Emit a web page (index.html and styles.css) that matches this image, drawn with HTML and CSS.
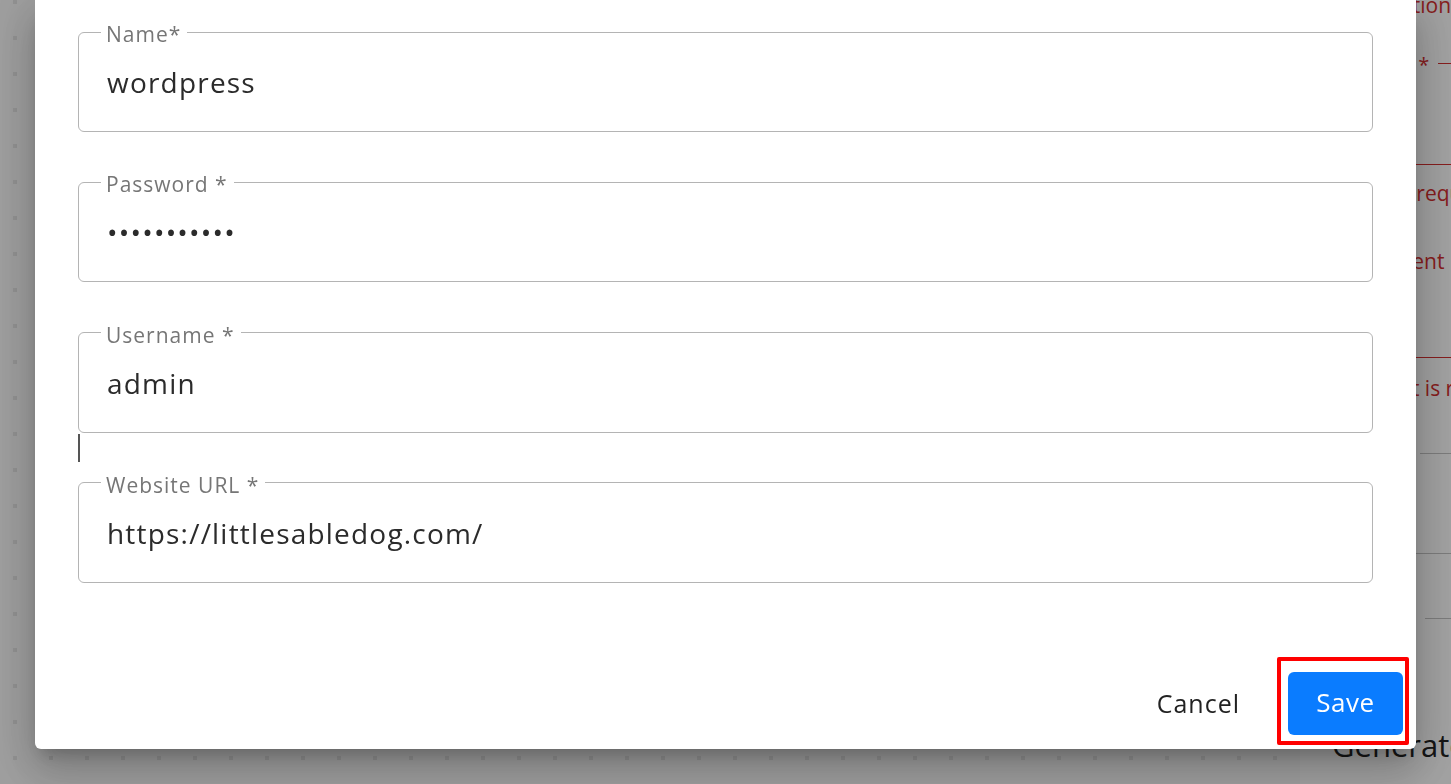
FILE: index.html
```html
<!DOCTYPE html>
<html lang="en">
<head>
  <meta charset="UTF-8" />
  <meta name="viewport" content="width=device-width, initial-scale=1.0"/>
  <title>Edit site</title>
  <link rel="stylesheet" href="styles.css">
</head>
<body>
  <!-- page behind the dialog -->
  <div class="page">
    <div class="canvas"></div>
    <aside class="side">
      <div class="side-title">Description</div>
      <fieldset class="side-field">
        <legend>Prompt *</legend>
      </fieldset>
      <p class="side-help help-one">Field is required</p>
      <div class="side-label">Content</div>
      <div class="side-rule error"></div>
      <p class="side-help help-two">Content is required</p>
      <div class="side-rule grey first"></div>
      <div class="side-rule grey second"></div>
      <div class="side-rule grey third"></div>
      <h2 class="side-heading">Generate</h2>
    </aside>
  </div>

  <div class="backdrop">
    <div class="dialog">
      <form class="form">
        <fieldset class="field">
          <legend>Name*</legend>
          <div class="value">wordpress</div>
        </fieldset>

        <fieldset class="field">
          <legend>Password *</legend>
          <div class="value secret">•••••••••••</div>
        </fieldset>

        <fieldset class="field">
          <legend>Username *</legend>
          <div class="value">admin</div>
        </fieldset>

        <div class="caret"></div>

        <fieldset class="field">
          <legend>Website URL *</legend>
          <div class="value">https://littlesabledog.com/</div>
        </fieldset>
      </form>

      <div class="actions">
        <button type="button" class="btn-text">Cancel</button>
        <div class="highlight">
          <button type="button" class="btn-primary">Save</button>
        </div>
      </div>
    </div>
  </div>
</body>
</html>
```

FILE: styles.css
```css
body {
  margin: 0;
  height: 784px;
  overflow: hidden;
  font-family: 'Open Sans', 'Noto Sans', sans-serif;
  color: #2b2b2b;
  background: #fff;
}

/* background page */
.page {
  display: flex;
  height: 784px;
}
.canvas {
  flex: 1;
  background-color: #fbfbfb;
  background-image: conic-gradient(from 270deg at 4px 4px, #e6e6e6 25%, transparent 0);
  background-size: 36px 36px;
  background-position: 13px 0;
}
.side {
  width: 151px;
  box-sizing: border-box;
  padding-left: 30px;
  background: #fff;
  color: #d32f2f;
  font-size: 21px;
  white-space: nowrap;
  overflow: hidden;
}
.side-title {
  margin-top: -10px;
  padding-left: 9px;
  line-height: 30px;
}
.side-field {
  margin: 31px 0 0 0;
  padding: 0;
  height: 114px;
  box-sizing: border-box;
  border: 1px solid #d32f2f;
  border-radius: 6px;
  width: 300px;
}
.side-field legend {
  margin-left: 8px;
  padding: 4px 9px 0 4px;
  font-size: 20px;
  line-height: 20px;
}
.side-help {
  margin: 13px 0 0 0;
  line-height: 30px;
}
.help-one {
  padding-left: 14px;
}
.help-two {
  margin-top: 15px;
  padding-left: 11px;
}
.side-label {
  margin-top: 38px;
  padding-left: 36px;
  line-height: 30px;
}
.side-rule {
  height: 1px;
  width: 300px;
}
.side-rule.error {
  background: #d32f2f;
  margin-top: 81px;
}
.side-rule.grey {
  background: #c4c4c4;
}
.side-rule.first {
  margin-top: 50px;
  margin-left: 90px;
}
.side-rule.second {
  margin-top: 99px;
  margin-left: 86px;
}
.side-rule.third {
  margin-top: 64px;
  margin-left: 95px;
}
.side-heading {
  margin: 108px 0 0 2px;
  font-size: 31px;
  line-height: 36px;
  font-weight: 400;
  color: #222;
}

/* dialog */
.backdrop {
  position: fixed;
  inset: 0;
  background: rgba(0, 0, 0, 0.37);
}
.dialog {
  margin-left: 35px;
  width: 1381px;
  height: 749px;
  background: #fff;
  border-radius: 0 0 6px 6px;
  box-shadow: 0 11px 15px -7px rgba(0,0,0,0.2), 0 24px 38px 3px rgba(0,0,0,0.14), 0 9px 46px 8px rgba(0,0,0,0.12);
  display: flex;
  flex-direction: column;
}
.form {
  padding: 20px 43px 0 43px;
  display: flex;
  flex-direction: column;
  gap: 38.3px;
}
.field {
  margin: 0;
  padding: 0 0 0 28px;
  height: 112px;
  box-sizing: border-box;
  border: 1px solid #b4b4b4;
  border-radius: 6px;
  min-width: 0;
}
.field legend {
  margin-left: -6px;
  padding: 4px 6px 0 5px;
  font-size: 21px;
  line-height: 20px;
  color: #767676;
  letter-spacing: 1px;
}
.value {
  margin-top: 20px;
  font-size: 28px;
  line-height: 36px;
  letter-spacing: 1.2px;
  color: #2b2b2b;
}
.caret {
  width: 1.5px;
  height: 28px;
  background: #555;
  margin: -37.3px 0 -29px 0;
}

.actions {
  margin-top: auto;
  padding: 0 7px 4px 0;
  display: flex;
  justify-content: flex-end;
  align-items: center;
  gap: 21px;
}
.btn-text {
  border: none;
  background: none;
  font-family: inherit;
  font-size: 25px;
  letter-spacing: 1px;
  color: #222;
  padding: 8px 16px;
  margin-top: 4px;
}
.highlight {
  border: 4px solid #ff0000;
  padding: 11px 2px 6px 7px;
  border-radius: 2px;
}
.btn-primary {
  display: block;
  width: 115px;
  height: 63px;
  padding: 0 0 3px 0;
  border: none;
  border-radius: 6px;
  background: #0a7cff;
  color: #fff;
  font-family: inherit;
  font-size: 26px;
  letter-spacing: 0.5px;
}
```
